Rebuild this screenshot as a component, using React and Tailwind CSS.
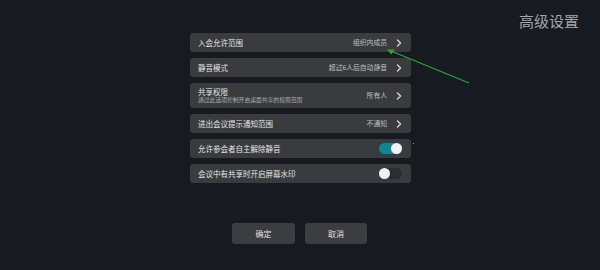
import React from 'react';

const font = { fontFamily: '"Noto Sans CJK SC", "Noto Sans", sans-serif' };

function Chevron() {
  return (
    <svg width="6" height="8" viewBox="0 0 6 8" className="ml-[9px]">
      <path d="M1.5 1 L4.5 4 L1.5 7" fill="none" stroke="#d8d9db" strokeWidth="1.4" strokeLinecap="round" strokeLinejoin="round" />
    </svg>
  );
}

function Toggle({ on }) {
  return (
    <div
      className={
        'w-[23px] h-[11px] rounded-full flex items-center ' +
        (on ? 'bg-[#0f8591] justify-end' : 'bg-[#2c2d31] justify-start')
      }
    >
      <div className="w-[11px] h-[11px] rounded-full bg-[#f2f2f2]" />
    </div>
  );
}

function Row({ label, sub, value, toggle }) {
  return (
    <div
      className={
        'w-[221px] rounded-[3px] bg-[#3a3b3f] flex items-center pl-[8px] pr-[9px] ' +
        (sub ? 'h-[25px]' : 'h-[19px]')
      }
    >
      <div className="flex-1 flex flex-col leading-none">
        <span className="text-[7.5px] text-[#e4e5e7]">{label}</span>
        {sub && <span className="text-[5.8px] text-[#a9abaf] mt-[2px]">{sub}</span>}
      </div>
      {toggle !== undefined ? (
        <Toggle on={toggle} />
      ) : (
        <div className="flex items-center">
          <span className="text-[6.8px] text-[#bfc0c3]">{value}</span>
          <Chevron />
        </div>
      )}
    </div>
  );
}

export default function App() {
  return (
    <div className="relative w-[600px] h-[270px] bg-[#171a21] overflow-hidden" style={font}>
      <div className="flex justify-end pr-[21px] pt-[12px] h-[33px]">
        <span className="text-[15px] leading-[18px] text-[#a3a5a9]">高级设置</span>
      </div>

      <div className="flex flex-col gap-[6px] pl-[190px]">
        <Row label="入会允许范围" value="组织内成员" />
        <Row label="静音模式" value="超过6人后自动静音" />
        <Row label="共享权限" sub="通过此选项控制开启桌面共享的权限范围" value="所有人" />
        <Row label="进出会议提示通知范围" value="不通知" />
        <Row label="允许参会者自主解除静音" toggle={true} />
        <Row label="会议中有共享时开启屏幕水印" toggle={false} />
      </div>

      <div className="flex gap-[10px] pl-[232px] mt-[40px]">
        <button className="w-[63px] h-[21px] rounded-[3px] bg-[#3c3d41] text-[8px] text-[#e0e1e3]">确定</button>
        <button className="w-[62px] h-[21px] rounded-[3px] bg-[#3c3d41] text-[8px] text-[#e0e1e3]">取消</button>
      </div>

      <span className="absolute left-[413px] top-[143px] w-[1px] h-[1px] bg-[#9a9ca0]" />

      <svg className="absolute left-0 top-0 pointer-events-none" width="600" height="270">
        <line x1="469" y1="83" x2="391" y2="51" stroke="#2fa43a" strokeWidth="1.2" />
        <path d="M387 49.5 L394.5 49.5 L391.5 54.5 Z" fill="#2fa43a" />
      </svg>
    </div>
  );
}
